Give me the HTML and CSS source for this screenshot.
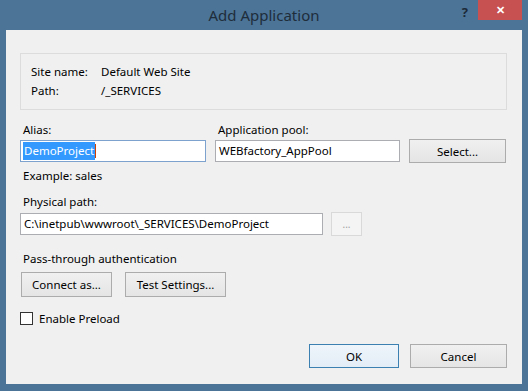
FILE: index.html
```html
<!DOCTYPE html>
<html lang="en">
<head>
    <meta charset="UTF-8">
    <meta name="viewport" content="width=device-width, initial-scale=1.0">
    <title>Add Application</title>
    <link rel="stylesheet" href="styles.css">
</head>
<body>
    <div class="window">
        <div class="titlebar">
            <span></span>
            <span class="title">Add Application</span>
            <div class="controls">
                <span class="help">?</span>
                <span class="close">&#x2715;</span>
            </div>
        </div>

        <div class="client">
            <div class="site-box">
                <div class="site-row"><span class="key">Site name:</span><span>Default Web Site</span></div>
                <div class="site-row"><span class="key">Path:</span><span>/_SERVICES</span></div>
            </div>

            <div class="alias-grid">
                <label class="label">Alias:</label>
                <label class="label">Application pool:</label>
                <span></span>
                <div class="input focused"><span class="selected">DemoProject</span><span class="caret"></span></div>
                <div class="input">WEBfactory_AppPool</div>
                <button class="btn select-btn">Select...</button>
            </div>

            <p class="hint">Example: sales</p>

            <label class="label path-label">Physical path:</label>
            <div class="path-row">
                <div class="input path-input">C:\inetpub\wwwroot\_SERVICES\DemoProject</div>
                <button class="btn browse-btn" disabled>...</button>
            </div>

            <p class="label auth-label">Pass-through authentication</p>
            <div class="auth-row">
                <button class="btn connect-btn">Connect as...</button>
                <button class="btn test-btn">Test Settings...</button>
            </div>

            <div class="check-row">
                <span class="checkbox"></span>
                <span>Enable Preload</span>
            </div>

            <div class="footer">
                <button class="btn ok-btn">OK</button>
                <button class="btn cancel-btn">Cancel</button>
            </div>
        </div>
    </div>
</body>
</html>
```

FILE: styles.css
```css
* {
    box-sizing: border-box;
}

body {
    margin: 0;
    background-color: #4b7497;
    font-family: 'Noto Sans', 'Open Sans', sans-serif;
    font-size: 11.5px;
    color: #000000;
}

.window {
    width: 528px;
    height: 391px;
    display: flex;
    flex-direction: column;
    padding: 0 6px 7px 6px;
    background-color: #4b7497;
}

.titlebar {
    height: 30px;
    display: grid;
    grid-template-columns: 1fr auto 1fr;
    align-items: start;
}

.title {
    font-size: 15px;
    color: #1f2d3b;
    line-height: 30px;
}

.controls {
    display: flex;
    justify-content: flex-end;
    align-items: flex-start;
}

.help {
    font-weight: bold;
    font-size: 13px;
    color: #1c2a38;
    line-height: 24px;
    margin-right: 10px;
}

.close {
    width: 44px;
    height: 20px;
    background-color: #c75050;
    color: #ffffff;
    font-size: 11px;
    font-weight: bold;
    text-align: center;
    line-height: 20px;
}

.client {
    flex: 1;
    background-color: #f0f0f0;
    padding: 23px 15px 0 14px;
}

.site-box {
    border: 1px solid #dcdcdc;
    height: 57px;
    padding: 8px 10px 0 10px;
}

.site-row {
    display: flex;
    line-height: 19px;
}

.key {
    width: 70px;
}

.label {
    display: block;
    line-height: 15px;
    margin: 0;
    padding-left: 3px;
}

.alias-grid {
    margin-top: 12px;
    display: grid;
    grid-template-columns: 186px 185px 97px;
    grid-template-rows: 15px 22px;
    column-gap: 9px;
    row-gap: 3px;
    align-items: center;
}

.input {
    height: 22px;
    border: 1px solid #abadb3;
    background-color: #ffffff;
    padding: 0 3px;
    line-height: 20px;
    white-space: nowrap;
    overflow: hidden;
}

.input.focused {
    border-color: #7da2ce;
    padding-left: 2px;
}

.selected {
    background-color: #3399ff;
    color: #ffffff;
    padding: 1px 1px 2px 1px;
}

.caret {
    display: inline-block;
    width: 1px;
    height: 14px;
    background-color: #d04000;
    vertical-align: -3px;
}

.btn {
    font-family: inherit;
    font-size: inherit;
    color: #000000;
    height: 24px;
    border: 1px solid #acacac;
    background: linear-gradient(#f0f0f0, #e5e5e5);
    padding: 0;
}

.hint {
    margin: 6px 0 0 0;
    padding-left: 3px;
    line-height: 15px;
}

.path-label {
    margin-top: 11px;
}

.path-row {
    margin-top: 3px;
    display: flex;
    align-items: center;
    gap: 8px;
}

.path-input {
    width: 303px;
}

.browse-btn {
    width: 31px;
    border-color: #d9d9d9;
    background: #f4f4f4;
    color: #a0a0a0;
    font-size: 10px;
}

.auth-label {
    margin-top: 15px;
}

.auth-row {
    margin-top: 6px;
    display: flex;
    gap: 13px;
    padding-left: 1px;
}

.auth-row .btn {
    height: 25px;
}

.connect-btn {
    width: 91px;
}

.test-btn {
    width: 101px;
}

.check-row {
    margin-top: 14px;
    display: flex;
    align-items: center;
    gap: 6px;
    line-height: 15px;
}

.checkbox {
    width: 13px;
    height: 13px;
    border: 1px solid #333333;
    background-color: #ffffff;
}

.footer {
    margin-top: 18px;
    display: flex;
    justify-content: flex-end;
    gap: 11px;
}

.ok-btn {
    width: 90px;
    border-color: #3c7fb1;
    background: linear-gradient(#eef5fb, #e3edf6);
}

.cancel-btn {
    width: 97px;
}
```
